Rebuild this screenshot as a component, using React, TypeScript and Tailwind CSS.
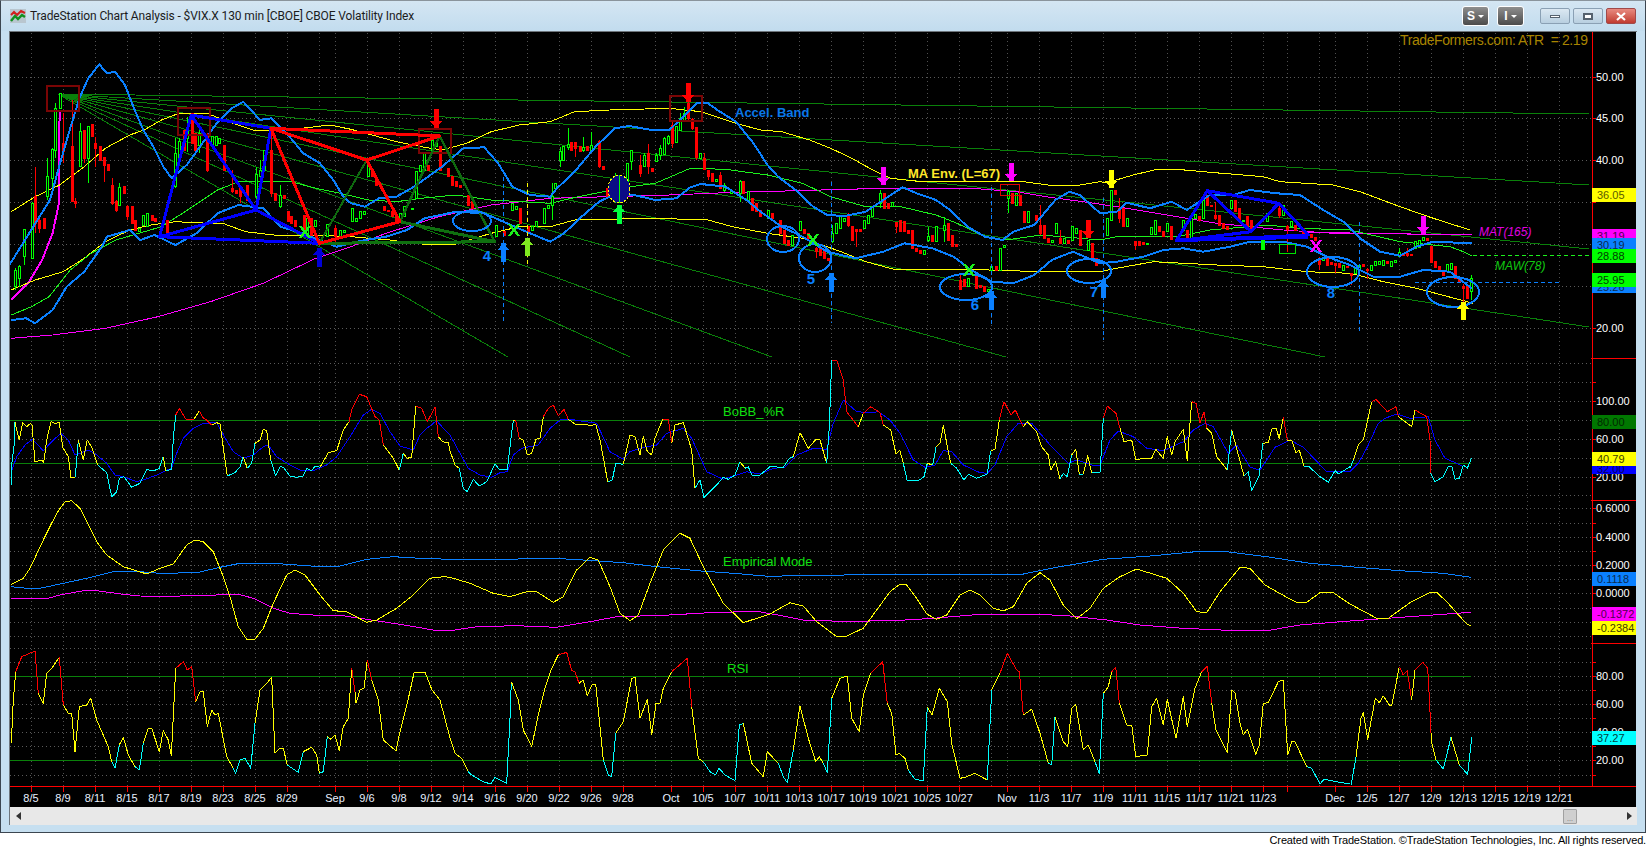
import React from "react";

// the series below are read off enlarged crops, so each one goes through a small
// window -> page conversion instead of carrying page coordinates by hand
const at = (ox: number, oy: number, sx = 3) => (s: string) =>
  s
    .trim()
    .split(/\s+/)
    .map((p) => {
      const [x, y] = p.split(",").map(Number);
      return `${(ox + x / sx).toFixed(1)},${(oy + y / 3).toFixed(1)}`;
    })
    .join(" ");

const z1 = at(0, 0);
const z6 = at(0, 70, 2.85);
const z7 = at(550, 70, 2.85);
const z8 = at(1050, 140);
const p5 = at(0, 640);
const p4 = at(1246, 640);
const o10 = at(0, 360);
const o11 = at(450, 360);
const o12 = at(900, 360);
const o9 = at(1300, 360);

const BAND = "#0a80ff";
const YEL = "#ffff00";
const LIME = "#1cf01c";
const DGREEN = "#0a800a";
const MAG = "#ff00ff";
const RED = "#ff0000";
const CYAN = "#00ffff";
const NAVY = "#0000ff";

const upperBand = [
  z1("0,840 150,600 180,490 215,370 240,290 265,235 298,193 320,220 345,215 375,255 400,320 430,390 460,440 490,500 515,535 560,495 600,440 650,370 695,325 730,305 780,360 815,355 860,400 910,460 960,490 1000,540 1030,590"),
  z6("1000,400 1040,410 1080,385 1130,380 1180,350 1260,290 1320,235 1380,232 1420,280 1460,350 1510,375 1568,380"),
  z7("20,355 70,305 130,230 185,175 225,168 290,180 340,180 380,140 420,98 450,100 480,122 530,155 580,220 620,285 650,320 700,360 750,410 790,435 840,438 900,425 950,390 1005,352 1045,370 1100,390 1140,420 1190,470 1240,500 1290,510 1320,485 1380,465 1440,390 1480,365 1510,375 1568,430"),
  z8("200,215 230,188 300,205 365,185 410,210 480,165 550,165 600,150 680,160 750,165 820,210 880,245 930,295 990,335 1050,347 1100,320 1150,305 1265,310"),
].join(" ");

const lowerBand = [
  z6("32,750 75,745 100,760 150,720 190,650 240,605 290,530 305,500 370,480 400,510 440,495 500,525 560,490 620,430 680,405 750,415 800,470 860,490 960,530 1040,510 1100,500 1160,480 1210,445 1300,425 1380,430 1500,485 1568,515"),
  z7("40,490 90,440 140,395 180,375 240,375 300,390 360,385 400,352 430,342 500,350 560,390 600,425 660,470 720,500 790,545 870,565 950,545 1010,520 1090,535 1150,560 1200,600 1260,635 1320,640 1380,615 1430,570 1490,545 1568,580"),
  z8("200,365 280,350 340,330 400,325 460,335 540,320 600,305 700,305 770,320 830,350 900,375 970,410 1050,410 1120,390 1200,395 1265,445"),
].join(" ");

const upperEnv = [
  z6("32,425 100,380 170,345 240,290 300,235 370,195 410,180 460,150 510,130 590,130 650,155 720,180 780,180 860,175 940,165 1000,178 1060,195 1130,215 1200,230 1260,240 1330,220 1400,185 1480,165 1568,155"),
  z7("70,125 170,120 340,115 430,125 530,160 600,180 660,185 740,210 800,235 860,265 920,300 970,325 1060,335 1250,335 1350,335 1420,345 1510,345 1568,335"),
  z8("170,128 250,105 320,88 380,88 480,97 640,110 690,125 850,135 930,155 1050,200 1150,235 1260,270"),
].join(" ");

const lowerEnv = [
  z6("32,660 100,630 180,605 240,565 300,515 370,480 430,465 500,455 640,462 700,485 780,495 900,495 1000,500 1110,510 1200,522 1290,525 1400,490 1480,470 1568,470"),
  z7("70,450 300,445 450,450 520,470 620,490 720,505 830,545 900,575 980,598 1250,600 1400,605 1568,605"),
  z8("200,385 310,365 500,375 640,380 770,395 900,400 1000,425 1100,445 1270,490"),
].join(" ");

const midGreen = [
  z6("32,735 90,710 140,680 200,600 260,550 330,510 460,470 520,430 620,360 680,335 830,335 900,355 970,370 1050,390 1130,395 1200,385 1300,375 1400,390 1568,400"),
  z7("80,380 200,355 300,340 400,295 500,298 620,315 720,340 800,380 900,410 1000,410 1100,435 1160,460 1240,500 1300,510 1400,495 1568,510"),
  z8("200,290 380,290 480,270 650,255 750,265 900,270 1050,305 1200,320 1240,335 1265,347"),
].join(" ");

const slowMag = [
  z6("32,805 150,795 300,775 450,740 600,695 750,640 900,565 1000,530 1100,490 1250,440 1400,405 1568,385"),
  z7("340,375 500,368 700,362 950,355 1200,355 1330,365"),
  z8("0,172 100,185 200,200 350,225 500,250 700,270 850,280 1165,283 1260,285"),
].join(" ");

const fastMag = z6("32,690 80,640 120,570 150,490 168,400 170,120");

const fanEnds: [number, number][] = [
  [1589, 114],
  [1589, 185],
  [1589, 249],
  [1589, 327],
  [1325, 357],
  [1006, 357],
  [772, 357],
  [630, 357],
  [508, 357],
];

// [x, high, low, bodyTop, bodyBottom] - no body values means the body fills the range
type C = number[];
const green6: C[] = [[43,595,660,600,650],[54,585,650,590,625],[68,478,585,478,560],[90,395,565,400,565],[135,265,390,320,380],[147,235,350,238,325],[158,100,265,115,240],[170,70,115],[227,160,290,185,290],[250,170,340,170,265],[340,340,405,352,405],[397,475,483],[408,435,465],[420,430,470],[498,205,355,250,350],[510,205,270,215,265],[534,140,245,180,205],[568,180,250,190,225],[603,200,230],[615,200,225],[625,205,220],[730,290,400,312,380],[742,270,340,300,320],[752,240,300],[797,345,415,375,410],[876,445,490],[899,450,470],[933,462,500],[968,480,500],[980,480,488],[1002,415,455],[1014,445,455],[1025,425,445],[1037,425,432],[1048,280,320],[1140,430,450],[1150,410,440],[1173,415,419],[1185,305,385],[1196,285,305],[1208,250,300],[1232,210,240],[1242,220,230],[1414,465,500],[1460,400,420],[1470,410,418],[1515,470,480],[1527,455,470],[1550,415,460],[1562,405,415]];
const red6: C[] = [[100,290,490,380,460],[112,440,490,452,475],[124,445,475],[180,130,280,220,245],[204,90,395,230,395],[215,385,415,395,400],[238,180,280,182,265],[261,162,200],[272,200,290,220,235],[284,230,270],[295,260,335,262,285],[307,282,300],[318,325,405,345,400],[330,390,425,395,420],[352,350,370],[363,405,450,408,440],[375,410,460],[386,450,480],[432,435,450],[443,445,455],[476,450,490],[523,180,240],[546,130,220],[557,190,240],[591,190,305,200,300],[637,225,300],[660,300,370,355,365],[672,360,370],[683,350,400,350,380],[705,345,390],[773,175,380,240,370],[785,370,390],[808,375,385],[820,425,455],[830,440,460],[842,450,470],[865,435,495],[887,445,495],[956,465,520,475,500],[1060,300,320],[1072,325,345],[1093,410,420],[1105,420,425],[1117,425,440],[1128,435,450],[1220,285,300],[1254,230,300],[1276,295,320],[1288,320,345],[1300,335,350],[1312,345,352],[1334,375,405],[1346,395,415],[1358,415,425],[1437,485,495],[1482,415,460],[1505,470,490]];
const green7: C[] = [[5,340,450,380,405],[15,340,355],[27,230,290,245,270],[38,230,270],[50,175,240,222,232],[95,200,245,232,240],[118,185,250,225,240],[186,310,400,325,385],[220,280,340],[232,240,300,242,275],[267,250,290,255,288],[301,250,275,255,275],[313,225,270,235,255],[324,200,250,205,252],[335,195,225,200,220],[358,170,220,170,218],[370,130,180,145,180],[381,110,150,130,150],[427,250,265],[472,328,335],[495,340,365,345,360],[517,360,370],[540,330,395,335,370],[563,365,395],[620,420,445],[690,495,525],[711,455,480],[803,465,520,490,515],[815,460,490],[826,440,475],[838,445,455],[895,450,475],[906,435,460],[918,410,440],[940,360,415,370,400],[974,398,408],[1065,540,552],[1077,470,515,498,510],[1100,470,515],[1122,440,515,465,480],[1190,625,650],[1247,658,665],[1258,590,600],[1281,535,600],[1293,525,532],[1305,360,430,365,385],[1327,370,405],[1362,425,458],[1430,512,517],[1442,460,490],[1465,505,520],[1488,470,510],[1499,475,490],[1533,510,540]];
const red7: C[] = [[60,218,240],[72,215,262,218,235],[84,228,245],[106,228,240],[140,210,295,215,290],[152,288,298],[163,355,385,355,378],[197,320,370],[255,255,322,285,310],[278,222,312,250,290],[290,295,305],[347,150,235,165,220],[392,95,150,100,145],[404,145,180,148,175],[415,170,270,172,262],[438,250,300,265,298],[450,300,330,300,318],[461,310,335],[483,305,358,315,355],[551,335,370],[575,385,420],[586,400,425],[598,420,438],[632,430,445],[655,450,490],[666,480,520],[678,510,525],[723,478,490],[735,490,505],[758,530,565,535,545],[770,535,555],[781,545,565],[792,566,572],[849,430,470,435,465],[861,470,510],[871,478,530,478,485],[883,478,485],[951,370,415],[962,400,415],[985,455,490,458,468],[997,450,485],[1008,455,485],[1020,480,490],[1031,480,535],[1042,535,545],[1054,540,550],[1088,495,515],[1133,460,510],[1145,495,530],[1156,522,528],[1168,615,660,630,658],[1179,628,650],[1213,620,655],[1224,645,652],[1236,648,665],[1270,588,600],[1316,370,400],[1339,375,405],[1351,425,458],[1385,435,450],[1396,405,495,465,490],[1408,465,505],[1419,505,517],[1453,480,520,505,520],[1476,510,520],[1510,480,525],[1544,520,570],[1556,565,585]];
const green8: C[] = [[172,235,285],[184,150,240],[232,235,260],[292,310,314],[304,262,282],[316,240,282],[352,250,275],[400,240,270],[424,235,295],[436,222,235],[460,180,235],[544,180,205],[580,240,245],[652,220,245],[700,195,225],[724,245,258],[820,355,362],[880,375,390],[916,385,400],[928,375,392],[964,375,390],[976,365,375],[988,365,372],[1000,362,375],[1024,365,380],[1036,362,368],[1048,325,350,338,350],[1096,303,325],[1108,300,322],[1120,292,302],[1192,372,395],[1204,370,388],[1264,405,480,415,455]];
const red8: C[] = [[196,152,162],[208,175,250,205,235],[220,205,260],[256,305,330,305,316],[268,305,315],[280,306,312],[328,258,275],[340,275,288],[364,260,297],[412,270,295],[448,230,240],[472,165,195],[484,195,200],[496,185,240,225,235],[508,225,255],[520,250,265],[532,260,268],[556,180,215],[568,205,245],[592,230,262],[604,240,272],[688,195,235,205,225],[712,255,335,258,268],[736,255,270],[760,265,285],[784,282,292],[796,292,300],[808,350,390,360,372],[832,355,375],[844,368,372],[856,368,400,370,375],[868,370,382],[892,378,382],[904,398,435,400,405],[940,372,378],[952,385,418,388,392],[1012,365,370],[1060,342,345],[1072,325,352,340,345],[1084,342,345],[1132,295,300],[1144,320,368],[1156,365,382],[1168,380,395],[1180,392,405],[1216,380,415],[1228,415,425],[1240,432,485,438,445],[1252,435,475]];

// indicator lines change colour by run: one [colour, points] per run
const bobb: [string, string][] = [
  [CYAN, o10("34,375 36,305 42,260 45,185")],
  [YEL, o10("45,185 50,210 58,240 68,188 80,200 92,190 96,195 105,305 125,300 131,307 140,240 153,185 165,190 178,188 188,262 205,290 213,353 226,352")],
  [CYAN, o10("226,352 235,240")],
  [YEL, o10("235,240 250,300 262,240 275,262 293,315")],
  [CYAN, o10("293,315 320,338 335,410 350,395 358,355 372,350 395,382 420,370 440,328 460,333 478,325 490,290")],
  [YEL, o10("490,290 497,332")],
  [CYAN, o10("497,332 515,328 520,235 527,165")],
  [RED, o10("527,165 538,145 558,178 582,178")],
  [YEL, o10("582,178 598,152")],
  [RED, o10("598,152 608,172 622,182 635,195")],
  [YEL, o10("635,195 650,188 660,192 682,348")],
  [CYAN, o10("682,348 705,338 720,320 730,290")],
  [YEL, o10("730,290 742,325")],
  [CYAN, o10("742,325 755,310 765,250")],
  [YEL, o10("765,250 780,240 790,208 800,212 812,300")],
  [CYAN, o10("812,300 827,348 840,320 850,322 870,348 890,352 910,348 920,325 935,332 945,318 960,322")],
  [YEL, o10("960,322 985,278 1010,272 1030,210 1047,185")],
  [RED, o10("1047,185 1055,150 1078,103 1100,110 1125,170 1138,180 1150,255")],
  [YEL, o10("1150,255 1180,295 1198,330")],
  [CYAN, o10("1198,330 1210,280")],
  [YEL, o10("1210,280 1222,295 1235,292 1247,138")],
  [RED, o10("1247,138 1265,145 1282,185 1305,142 1315,230")],
  [YEL, o10("1315,230 1328,245 1345,248 1350,272")],
  [YEL, o11("0,272 15,315 28,325")],
  [CYAN, o11("28,325 40,385 52,395 70,358 88,378 110,365 135,312 148,328 172,330 183,235 190,182")],
  [YEL, o11("190,182 197,180")],
  [RED, o11("197,180 208,235")],
  [YEL, o11("208,235 220,240 232,285 245,280 258,238 270,235 280,170")],
  [RED, o11("280,170 295,145 310,135 325,168 342,148 355,178")],
  [YEL, o11("355,178 375,192 410,192 420,198 437,192 450,240 465,320 473,367")],
  [CYAN, o11("473,367 487,360 497,310 520,313")],
  [YEL, o11("520,313 540,225 555,230 570,285 580,228 592,275 605,285 615,235 638,178")],
  [RED, o11("638,178 655,178 665,250")],
  [YEL, o11("665,250 675,195 700,188 725,270 735,385")],
  [CYAN, o11("735,385 750,360 762,413 800,375 820,352 835,358 855,345 870,305")],
  [YEL, o11("870,305 885,325")],
  [CYAN, o11("885,325 895,320 905,345 930,345 960,320 1000,322 1018,295 1030,290")],
  [YEL, o11("1030,290 1050,218 1075,265 1098,238 1110,240 1130,310")],
  [CYAN, o11("1130,310 1138,200 1145,0")],
  [RED, o11("1145,0 1160,0 1180,60 1190,155 1225,200")],
  [YEL, o11("1225,200 1240,160")],
  [RED, o11("1240,160 1262,140 1290,158 1300,195")],
  [YEL, o11("1300,195 1322,210 1338,282 1350,270")],
  [YEL, o12("0,272 10,310")],
  [CYAN, o12("10,310 22,363 55,362 72,350 82,310")],
  [YEL, o12("82,310 98,315")],
  [CYAN, o12("98,315 108,262")],
  [YEL, o12("108,262 120,250 130,197 152,310")],
  [CYAN, o12("152,310 170,325 192,360 205,343 230,355 262,342 272,272")],
  [YEL, o12("272,272 285,268 298,180")],
  [RED, o12("298,180 312,125 333,165 346,150 370,200")],
  [YEL, o12("370,200 382,185 410,215 425,260 445,285 452,330 467,305 480,357")],
  [CYAN, o12("480,357 490,340 502,350 515,285")],
  [YEL, o12("515,285 527,268 538,343")],
  [CYAN, o12("538,343 550,343")],
  [YEL, o12("550,343 563,287 575,338")],
  [CYAN, o12("575,338 600,338 610,175")],
  [RED, o12("610,175 622,138 648,160 660,205")],
  [YEL, o12("660,205 672,245 695,240 707,298 755,295 767,268 790,295 802,230 815,285 825,245 850,208 862,303 870,190 875,125")],
  [RED, o12("875,125 888,130 900,190 912,155 920,205")],
  [YEL, o12("920,205 935,220 950,290 982,330")],
  [CYAN, o12("982,330 995,210")],
  [YEL, o12("995,210 1032,348")],
  [CYAN, o12("1032,348 1045,335 1055,393 1078,345 1088,250")],
  [YEL, o12("1088,250 1105,248 1115,207 1128,205 1138,235 1150,172")],
  [RED, o12("1150,172 1162,240")],
  [YEL, o12("1162,240 1175,240 1188,280 1198,270 1212,318")],
  [CYAN, o12("1212,318 1225,318 1260,350 1285,367 1305,332 1315,342 1350,320")],
  [CYAN, o9("150,325 160,300")],
  [YEL, o9("160,300 175,255 190,240 215,125")],
  [RED, o9("215,125 228,118 262,155 288,140 295,170")],
  [YEL, o9("295,170 335,200 345,150")],
  [RED, o9("345,150 380,170 390,240 392,340")],
  [CYAN, o9("392,340 405,365 430,350 445,318 455,318 465,358 478,355 490,315 502,325 515,293")],
];

const bobbSignal = [
  o10("36,330 50,290 75,255 97,238 130,272 155,245 182,220 205,240 225,285 240,280 265,270 290,285 320,310 345,345 370,350 410,365 430,360 470,345 500,330 515,325 530,280 550,235 580,205 610,190 650,188 670,225 700,275 730,295 760,285 790,260 805,255 830,290 870,315 900,330 940,332 980,315 1010,290 1050,230 1090,165 1115,148 1140,160 1170,215 1200,258 1240,270 1260,225 1280,205 1310,182 1330,205 1350,225"),
  o11("30,280 55,325 90,345 125,352 150,338 172,335 190,285 215,265 265,255 300,205 330,180 360,178 440,190 480,275 520,298 540,275 580,262 620,255 650,220 700,205 725,235 770,335 820,358 860,345 890,335 930,342 970,325 1005,322 1040,285 1090,265 1130,268 1150,190 1180,120 1220,155 1260,158 1285,155 1320,180 1350,220"),
  o12("40,300 75,322 105,315 130,272 155,275 190,315 240,338 262,340 285,315 320,230 355,190 395,190 450,255 505,310 530,300 575,315 600,315 630,240 655,213 700,230 740,265 790,272 850,245 880,210 915,190 940,200 985,280 1010,255 1050,322 1080,330 1125,262 1170,240 1210,262 1280,335 1350,335"),
  o9("175,310 200,265 235,190 255,175 290,162 330,175 385,170 405,240 435,295 470,310 490,320"),
].join(" ");

const emdYellow = [
  o10("33,674 70,655 90,625 130,540 170,460 195,425 215,422 240,445 290,545 320,585 370,620 440,642 480,625 520,612 560,555 585,540 610,545 640,575 670,650 690,710 715,800 740,838 765,838 790,805 820,730 860,645 885,630 915,645 960,705 1000,752 1040,755 1100,787 1130,780 1190,745 1240,705 1290,655 1330,650 1350,652"),
  o11("60,670 130,700 180,710 230,695 260,695 310,727 340,710 380,630 420,592 445,600 480,680 510,760 540,782 565,765 600,670 640,570 690,520 720,535 760,620 820,730 880,788 960,762 1020,728 1060,738 1100,785 1160,830 1190,828 1240,805 1280,750 1320,695 1350,672"),
  o12("20,675 50,715 80,762 110,778 140,765 180,705 210,690 240,705 280,745 310,753 340,740 380,670 420,638 450,660 490,735 530,776 570,745 610,685 660,650 710,627 800,655 850,700 890,755 920,758 960,695 1020,622 1050,625 1095,675 1160,712 1190,727 1220,727 1260,698 1300,698 1350,732"),
  o9("230,775 265,775 330,728 390,697 410,697 440,725 500,792 513,798"),
].join(" ");
const emdBlue = [
  o10("33,680 80,685 120,685 180,672 260,655 340,635 420,635 480,640 590,638 660,622 720,610 850,612 960,620 1020,618 1100,598 1180,590 1260,595 1350,598"),
  o11("160,598 310,595 400,600 520,608 620,620 740,632 850,640 970,650 1020,646 1350,644"),
  o12("360,644 470,622 610,598 750,588 900,574 980,575 1100,590 1230,610 1350,620"),
  o9("300,632 430,640 513,652"),
].join(" ");
const emdMag = [
  o10("33,715 145,715 180,705 250,692 290,692 370,703 420,708 500,710 580,706 720,704 760,715 820,745 870,760 950,766 1020,766 1100,778 1180,790 1260,803 1310,812 1350,812"),
  o11("80,800 200,797 320,802 420,785 500,770 640,766 780,758 920,754 1000,768 1070,782 1220,784 1350,781"),
  o12("100,775 240,763 410,763 500,767 620,780 720,795 850,805 1030,813 1100,812 1200,795 1350,783"),
  o9("400,765 513,757"),
].join(" ");

const rsi: [string, string][] = [
  [YEL, p5("34,310 40,180 47,95")],
  [RED, p5("47,95 65,50 105,33 115,160")],
  [YEL, p5("115,160 130,190 140,100 155,85 178,52")],
  [RED, p5("178,52 190,195")],
  [YEL, p5("190,195 205,220 215,220 225,335 238,200 260,195 272,175 290,240 325,320 335,365")],
  [CYAN, p5("335,365 345,385 358,315")],
  [YEL, p5("358,315 370,292 385,345 405,380")],
  [CYAN, p5("405,380 418,390 430,310")],
  [YEL, p5("430,310 445,265 455,265 478,335 490,272 505,300 514,348 527,85")],
  [RED, p5("527,85 550,65 562,90 575,80 587,185")],
  [YEL, p5("587,185 600,155 610,155 622,260 635,210 645,225 655,220 680,350 700,385")],
  [CYAN, p5("700,385 707,400 720,360 735,355 752,385 765,250")],
  [YEL, p5("765,250 780,150 800,130 815,112 825,340 840,325 850,325 862,375")],
  [CYAN, p5("862,375 895,397 910,335")],
  [YEL, p5("910,335 935,322 950,345 958,400")],
  [CYAN, p5("958,400 970,395 982,290")],
  [YEL, p5("982,290 993,298 1005,285 1018,332 1030,260 1045,235 1055,85")],
  [RED, p5("1055,85 1065,155")],
  [YEL, p5("1065,155 1068,190 1080,150 1092,145 1102,60")],
  [RED, p5("1102,60 1115,120")],
  [YEL, p5("1115,120 1135,180 1150,300 1188,333 1200,275") + " 408,700 414,673 425,672 432,690 440,700 450,738"],
  [YEL, o11("0,1135 15,1180 35,1195 55,1235")],
  [CYAN, o11("55,1235 65,1245 100,1265 122,1272 135,1252 170,1270 180,1075 184,965")],
  [YEL, o11("184,965 205,1020 220,1110 245,1160 265,1065 285,985 305,925 325,885")],
  [RED, o11("325,885 350,877 365,932 375,935 387,970")],
  [YEL, o11("387,970 400,960 412,1008 425,975 437,972 460,1200")],
  [CYAN, o11("460,1200 475,1245 485,1250 497,1120")],
  [YEL, o11("497,1120 520,1085 545,955 555,952 570,1075 592,1018 605,1125 618,1030 630,1030 640,985 665,935")],
  [RED, o11("665,935 712,895 725,1040")],
  [YEL, o11("725,1040 745,1195 760,1205")],
  [CYAN, o11("760,1205 780,1235 797,1245 807,1225 825,1245 855,1262 868,1095 880,1090")],
  [YEL, o11("880,1090 905,1210 940,1250 952,1175 985,1210")],
  [CYAN, o11("985,1210 1000,1250 1012,1268 1030,1170")],
  [YEL, o11("1030,1170 1050,1038 1075,1135 1097,1205 1108,1190 1120,1210")],
  [CYAN, o11("1120,1210 1132,1238 1145,1015")],
  [YEL, o11("1145,1015 1170,955 1192,948 1205,1075 1228,1115 1240,1005 1262,940")],
  [RED, o11("1262,940 1298,905 1312,1030")],
  [YEL, o11("1312,1030 1325,1060 1338,1185 1350,1180")],
  [YEL, o12("0,1183 15,1195 25,1230")],
  [CYAN, o12("25,1230 45,1258 70,1262 82,1040")],
  [YEL, o12("82,1040 96,1065 118,985 142,1025 155,1150 180,1255 195,1252 225,1240 262,1260")],
  [CYAN, o12("262,1260 275,990")],
  [YEL, o12("275,990 300,940")],
  [RED, o12("300,940 322,880 350,930 358,935 370,1065")],
  [YEL, o12("370,1065 395,1048 420,1120 445,1210")],
  [CYAN, o12("445,1210 455,1215 465,1070")],
  [YEL, o12("465,1070 490,1145 503,1160 515,1045 527,1033 550,1170 565,1155 585,1205")],
  [CYAN, o12("585,1205 598,1240 610,1000")],
  [YEL, o12("610,1000 625,980 635,935")],
  [RED, o12("635,935 647,922 658,1030")],
  [YEL, o12("658,1030 680,1095 695,1095 707,1190 742,1185 755,1040 770,1015 790,1095 802,1018 828,1135 850,1010 862,1100 885,985 905,935")],
  [RED, o12("905,935 922,918 935,1030")],
  [YEL, o12("935,1030 948,1110 982,1178 995,990 1005,1000 1020,1090 1030,1125 1042,1108 1067,1183 1078,1155 1090,1030 1105,1028 1135,965 1150,960 1163,1185 1175,1145 1185,1145 1220,1220")],
  [CYAN, o12("1220,1220 1235,1225 1260,1272 1272,1258 1310,1265 1350,1272")],
  [CYAN, p4("316,434 330,350")],
  [YEL, p4("330,350 345,235 352,218 365,298 388,175 400,188 412,168 430,195 437,198 460,80")],
  [RED, p4("460,80 472,105 484,92 495,168")],
  [YEL, p4("495,168 497,178 507,90")],
  [RED, p4("507,90 530,67 545,85 550,170 555,280")],
  [YEL, p4("555,280 555,300 570,360")],
  [CYAN, p4("570,360 592,387 615,292")],
  [YEL, p4("615,292 640,375")],
  [CYAN, p4("640,375 665,403 677,292")],
];

const dates: [number, string][] = [
  [31, "8/5"], [63, "8/9"], [95, "8/11"], [127, "8/15"], [159, "8/17"], [191, "8/19"], [223, "8/23"], [255, "8/25"], [287, "8/29"], [335, "Sep"],
  [367, "9/6"], [399, "9/8"], [431, "9/12"], [463, "9/14"], [495, "9/16"], [527, "9/20"], [559, "9/22"], [591, "9/26"], [623, "9/28"], [671, "Oct"],
  [703, "10/5"], [735, "10/7"], [767, "10/11"], [799, "10/13"], [831, "10/17"], [863, "10/19"], [895, "10/21"], [927, "10/25"], [959, "10/27"], [1007, "Nov"],
  [1039, "11/3"], [1071, "11/7"], [1103, "11/9"], [1135, "11/11"], [1167, "11/15"], [1199, "11/17"], [1231, "11/21"], [1263, "11/23"], [1335, "Dec"],
  [1367, "12/5"], [1399, "12/7"], [1431, "12/9"], [1463, "12/13"], [1495, "12/15"], [1527, "12/19"], [1559, "12/21"],
];
const gridX = [...dates.map((d) => d[0]), 319, 655, 991, 1287, 1319];
const gridY = [
  77, 118, 160, 202, 244, 286, 328,
  363, 382, 401, 420, 439, 458, 477, 495,
  508, 523, 537, 551, 565, 579, 593, 608, 622, 636,
  648, 662, 676, 690, 704, 718, 732, 746, 760, 775,
];

const axisLabels: [number, string][] = [
  [77, "50.00"], [118, "45.00"], [160, "40.00"], [328, "20.00"],
  [401, "100.00"], [439, "60.00"], [477, "20.00"],
  [508, "0.6000"], [537, "0.4000"], [565, "0.2000"], [593, "0.0000"],
  [676, "80.00"], [704, "60.00"], [732, "40.00"], [760, "20.00"],
];
const axisTicks = [77, 118, 160, 202, 244, 286, 328, 382, 401, 420, 439, 458, 477, 508, 523, 537, 551, 565, 579, 593, 608, 622, 662, 676, 690, 704, 718, 732, 746, 760, 775];

// value tags stacked on the price axis, painted in this order
const tags: [number, number, string, string, string][] = [
  [188, 14, YEL, "36.05", "#5a5a00"],
  [229, 14, MAG, "31.19", "#500050"],
  [238, 11, BAND, "30.19", "#0a2a50"],
  [249, 14, "#00ff00", "28.88", "#004000"],
  [280, 13, BAND, "25.26", "#0a2a50"],
  [273, 14, "#00ff00", "25.95", "#004000"],
  [415, 14, "#007800", "80.00", "#002800"],
  [462, 12, NAVY, "32.00", "#000060"],
  [452, 14, YEL, "40.79", "#404000"],
  [572, 14, BAND, "0.1118", "#0a2a50"],
  [607, 14, MAG, "-0.1372", "#500050"],
  [621, 14, YEL, "-0.2384", "#404000"],
  [731, 14, CYAN, "37.27", "#004040"],
];

const arrows: [number, number, number, string, boolean][] = [
  [436, 109, 128, RED, false],
  [319, 248, 267, "#0000d8", true],
  [503.5, 243, 262, BAND, true],
  [527, 238, 256, "#7fe820", true],
  [688, 83, 102, RED, false],
  [619, 205, 224, "#00ff40", true],
  [831, 273, 292, BAND, true],
  [991, 291, 310, BAND, true],
  [883, 167, 185, MAG, false],
  [1011, 163, 181, MAG, false],
  [1088, 220, 238, RED, false],
  [1111, 170, 188, YEL, false],
  [1103, 280, 298, BAND, true],
  [1423, 216, 234, MAG, false],
  [1463, 302, 320, YEL, true],
];

const dashes: [number, number, number, number, string][] = [
  [503.5, 177, 503.5, 323, BAND],
  [527, 183, 527, 265, YEL],
  [831, 182, 831, 323, BAND],
  [991, 187, 991, 327, BAND],
  [1103, 198, 1103, 340, BAND],
  [1359, 222, 1359, 333, BAND],
  [1415, 282, 1562, 282, BAND],
];

const rings: [number, number, number, number][] = [
  [472, 221, 19, 10],
  [783, 239, 16, 13],
  [815, 258, 16, 14],
  [966, 287, 26, 13],
  [1089, 271, 22, 12],
  [1333, 272, 26, 15],
  [1453, 292, 26, 15],
];

const crosses: [number, number, string][] = [
  [305, 232, LIME],
  [514, 230, LIME],
  [813, 240, LIME],
  [969, 270, LIME],
  [1316, 246, MAG],
];

const numbers: [number, number, string][] = [
  [487, 256, "4"],
  [811, 279, "5"],
  [975, 305, "6"],
  [1094, 292, "7"],
  [1331, 293, "8"],
];

function Candles({ list, conv, up }: { list: C[]; conv: (s: string) => string; up: boolean }) {
  return (
    <>
      {list.map(([x, hi, lo, bt, bb], i) => {
        const [rx, top] = conv(`${x},${hi}`).split(",").map(Number);
        const [, bottom] = conv(`${x},${lo}`).split(",").map(Number);
        const [, bodyTop] = conv(`${x},${bt ?? hi}`).split(",").map(Number);
        const [, bodyBottom] = conv(`${x},${bb ?? lo}`).split(",").map(Number);
        const cx = Math.round(rx) + 0.5;
        const color = up ? "#00ff00" : RED;
        return (
          <g key={i}>
            <line x1={cx} x2={cx} y1={top} y2={bottom} stroke={color} strokeWidth={1} />
            <rect
              x={cx - 1}
              y={bodyTop}
              width={2}
              height={Math.max(bodyBottom - bodyTop, 1)}
              fill={up ? "#000" : RED}
              stroke={color}
              strokeWidth={1}
            />
          </g>
        );
      })}
    </>
  );
}

function Arrow({ x, y1, y2, color, up }: { x: number; y1: number; y2: number; color: string; up: boolean }) {
  const head = up
    ? `${x - 6},${y1 + 7} ${x},${y1} ${x + 6},${y1 + 7}`
    : `${x - 6},${y2 - 7} ${x},${y2} ${x + 6},${y2 - 7}`;
  return (
    <>
      <rect x={x - 2.5} y={y1} width={5} height={y2 - y1} fill={color} />
      <polygon points={head} fill={color} />
    </>
  );
}

function Line({ points, color, w = 1, dash }: { points: string; color: string; w?: number; dash?: string }) {
  return <polyline points={points} fill="none" stroke={color} strokeWidth={w} strokeDasharray={dash} strokeLinejoin="round" />;
}

function Chart() {
  return (
    <svg
      width={1626}
      height={775}
      viewBox="10 32 1626 775"
      className="block bg-black"
      shapeRendering="crispEdges"
      fontFamily="'Liberation Sans', Arial, sans-serif"
    >
      {/* dotted grid */}
      {gridY.map((y) => (
        <line key={y} x1={10} x2={1592} y1={y} y2={y} stroke="#5a5a5a" strokeDasharray="1 3" />
      ))}
      {gridX.map((x) => (
        <line key={x} x1={x} x2={x} y1={33} y2={786} stroke="#505050" strokeDasharray="1 3" />
      ))}

      {/* gann fan */}
      <polygon points="58,94 92,94 80,103" fill="#0a6a0a" />
      {fanEnds.map(([x, y]) => (
        <line key={`${x}-${y}`} x1={58} y1={94} x2={x} y2={y} stroke={DGREEN} />
      ))}

      <Line points={slowMag} color={MAG} />
      <Line points={z8("770,277 1265,285")} color={MAG} />
      <Line points={fastMag} color={MAG} w={2} />
      <Line points={upperEnv} color={YEL} />
      <Line points={lowerEnv} color={YEL} />
      <Line points={midGreen} color={LIME} />
      <line x1={1473} x2={1589} y1={255} y2={255} stroke={LIME} strokeDasharray="4 3" />

      <Candles list={green6} conv={z6} up />
      <Candles list={red6} conv={z6} up={false} />
      <Candles list={green7} conv={z7} up />
      <Candles list={red7} conv={z7} up={false} />
      <Candles list={green8} conv={z8} up />
      <Candles list={red8} conv={z8} up={false} />

      <Line points={upperBand} color={BAND} w={2} />
      <Line points={lowerBand} color={BAND} w={2} />

      {/* pattern boxes */}
      <g fill="none" stroke="#7a0505" strokeWidth={2}>
        <rect x={47} y={86} width={32} height={25} />
        <rect x={178} y={108} width={32} height={27} />
        <rect x={419} y={129} width={32} height={24} />
        <rect x={670} y={96} width={32} height={25} />
      </g>
      <rect x={1000} y={184} width={19} height={11} fill="none" stroke="#e00000" />
      <rect x={1279} y={244} width={16} height={9} fill="none" stroke="#00e000" />
      <rect x={1261} y={240} width={4} height={10} fill="#00ff00" />

      {/* harmonic patterns */}
      <Line points={z6("455,500 545,135 772,175 730,420 455,500 910,520 730,420 545,135")} color="#0000ff" w={3} />
      <Line points={z6("910,520 1045,270")} color="#0f6a0f" w={2} />
      <Line points={z6("1140,455 1253,198 1410,515")} color="#0f6a0f" w={2.5} />
      <Line points={z6("910,520 1410,515 1140,455")} color="#0f700f" w={3} />
      <Line points={z6("772,175 910,520 1140,455 1045,270 772,175 1253,198 1045,270")} color={RED} w={3} />
      <Line points={z8("378,303 472,152 686,190 775,285 378,303 603,275 472,152")} color="#0000ff" w={3} />
      <Line points={z8("603,275 686,190")} color="#0000ff" w={3} />
      <Line points={z8("378,300 775,290")} color="#0000ff" w={4} />

      {rings.map(([cx, cy, rx, ry], i) => (
        <ellipse key={i} cx={cx} cy={cy} rx={rx} ry={ry} fill="none" stroke={BAND} strokeWidth={2} />
      ))}
      <ellipse cx={619} cy={189} rx={11} ry={14} fill="#0b0b86" stroke={YEL} strokeDasharray="2 2" />
      <line x1={619} x2={619} y1={175} y2={203} stroke="#00ff00" />

      {dashes.map(([x1, y1, x2, y2, c], i) => (
        <line key={i} x1={x1} y1={y1} x2={x2} y2={y2} stroke={c} strokeDasharray="4 3" />
      ))}
      {arrows.map(([x, y1, y2, c, up], i) => (
        <Arrow key={i} x={x} y1={y1} y2={y2} color={c} up={up} />
      ))}
      {crosses.map(([x, y, c], i) => (
        <path key={i} d={`M${x - 5} ${y - 6}L${x + 5} ${y + 6}M${x + 5} ${y - 6}L${x - 5} ${y + 6}`} stroke={c} strokeWidth={2.4} fill="none" />
      ))}

      {/* main pane labels */}
      <text x={1400} y={45} fontSize={14} fill="#a88400" textLength={188}>TradeFormers.com: ATR{"\u00a0\u00a0"}= 2.19</text>
      <text x={735} y={117} fontSize={13} fontWeight={700} fill="#0a78e8">Accel. Band</text>
      <text x={908} y={178} fontSize={13} fontWeight={700} fill="#ffe82a">MA Env. (L=67)</text>
      <text x={1479} y={236} fontSize={12} fontStyle="italic" fill="#e000e0">MAT(165)</text>
      <text x={1495} y={270} fontSize={12} fontStyle="italic" fill="#10c810">MAW(78)</text>
      {numbers.map(([x, y, n]) => (
        <text key={n} x={x} y={y + 5} textAnchor="middle" fontSize={15} fontWeight={700} fill={BAND}>{n}</text>
      ))}

      {/* BoBB_%R */}
      <line x1={10} x2={1471} y1={420} y2={420} stroke={DGREEN} />
      <line x1={10} x2={1471} y1={463} y2={463} stroke={DGREEN} />
      <Line points={bobbSignal} color={NAVY} />
      {bobb.map(([c, pts], i) => (
        <Line key={i} points={pts} color={c} />
      ))}
      <text x={723} y={416} fontSize={13} fill="#10e010">BoBB_%R</text>

      {/* Empirical Mode */}
      <Line points={emdBlue} color={BAND} />
      <Line points={emdMag} color={MAG} />
      <Line points={emdYellow} color={YEL} />
      <text x={723} y={566} fontSize={13} fill="#10e010">Empirical Mode</text>

      {/* RSI */}
      <line x1={10} x2={1471} y1={676} y2={676} stroke={DGREEN} />
      <line x1={10} x2={1471} y1={760} y2={760} stroke={DGREEN} />
      {rsi.map(([c, pts], i) => (
        <Line key={i} points={pts} color={c} />
      ))}
      <text x={727} y={673} fontSize={13} fill="#10e010">RSI</text>

      {/* price axis */}
      <line x1={1592} x2={1592} y1={32} y2={786} stroke={RED} />
      {[358, 500, 643].map((y) => (
        <line key={y} x1={1591} x2={1636} y1={y} y2={y} stroke={RED} />
      ))}
      {axisTicks.map((y) => (
        <line key={y} x1={1592} x2={1596} y1={y} y2={y} stroke={RED} />
      ))}
      {axisLabels.map(([y, t]) => (
        <text key={`${y}${t}`} x={1596} y={y + 4} fontSize={11} fill="#fff">{t}</text>
      ))}
      {tags.map(([y, h, bg, t, fg]) => (
        <g key={`${y}${t}`}>
          <rect x={1592} y={y} width={44} height={h} fill={bg} />
          <text x={1597} y={y + 11} fontSize={11} fill={fg}>{t}</text>
        </g>
      ))}

      {/* date axis */}
      <line x1={10} x2={1636} y1={786} y2={786} stroke={RED} />
      {dates.concat([[1287, ""]] as [number, string][]).map(([x]) => (
        <line key={x} x1={x} x2={x} y1={786} y2={792} stroke={RED} />
      ))}
      {dates.map(([x, t]) => (
        <text key={t} x={x} y={802} textAnchor="middle" fontSize={11} fill="#e8f0ff">{t}</text>
      ))}
    </svg>
  );
}

function AppIcon() {
  return (
    <svg width={16} height={14} viewBox="0 0 16 14" className="mr-1 shrink-0">
      <rect width={16} height={14} fill="#b9c6cf" />
      <path d="M1 6L4 3L7 6L11 2L15 4" fill="none" stroke="#d02020" strokeWidth={2} />
      <path d="M1 12L5 7L8 10L12 6L15 8" fill="none" stroke="#109020" strokeWidth={2.4} />
    </svg>
  );
}

function MenuButton({ label }: { label: string }) {
  return (
    <div className="flex h-[20px] w-[27px] items-center justify-center gap-[3px] rounded-[3px] border border-white bg-gradient-to-b from-[#8f8f8f] to-[#4c4c4c] text-[12px] font-bold text-white">
      <span>{label}</span>
      <span className="h-0 w-0 border-x-[3px] border-t-[3px] border-x-transparent border-t-white" />
    </div>
  );
}

function WinButton({ className, children }: { className: string; children: React.ReactNode }) {
  return (
    <div className={`flex h-[16px] w-[30px] items-center justify-center rounded-[2px] border ${className}`}>
      {children}
    </div>
  );
}

export default function App() {
  return (
    <div className="flex h-[847px] w-[1646px] flex-col overflow-hidden bg-white font-['Liberation_Sans',Arial,sans-serif]">
      <div className="flex h-[833px] w-[1646px] flex-col border border-[#3c4650] border-t-[#8a949c] bg-[#c6dff0]">
        <div className="flex h-[30px] shrink-0 items-center bg-gradient-to-b from-[#d4e6f3] to-[#c2dcee] pl-[9px] pr-[9px]">
          <AppIcon />
          <span className="font-['Roboto',sans-serif] text-[12px] tracking-[-0.13px] text-[#1c1c1c]">
            TradeStation Chart Analysis - $VIX.X 130 min [CBOE] CBOE Volatility Index
          </span>
          <div className="ml-auto flex items-center gap-[8px]">
            <MenuButton label="S" />
            <MenuButton label="I" />
            <div className="ml-[8px] flex items-center gap-[3px]">
              <WinButton className="border-[#8aa0b4] bg-gradient-to-b from-[#dbe8f2] to-[#b8cfe0]">
                <span className="h-[3px] w-[10px] border border-[#56626e] bg-white" />
              </WinButton>
              <WinButton className="border-[#8aa0b4] bg-gradient-to-b from-[#dbe8f2] to-[#b8cfe0]">
                <span className="h-[7px] w-[10px] border-2 border-[#56626e] bg-white" />
              </WinButton>
              <WinButton className="border-[#a04a4a] bg-gradient-to-b from-[#e88a80] to-[#c03a30]">
                <svg width={12} height={9} viewBox="0 0 12 9">
                  <path d="M2 1L10 8M10 1L2 8" stroke="#fff" strokeWidth={2.2} />
                </svg>
              </WinButton>
            </div>
          </div>
        </div>
        <div className="flex min-h-0 flex-1 flex-col pl-[8px] pr-[8px]">
          <div className="border-l border-t border-[#6e757b]">
            <Chart />
          </div>
          <div className="flex h-[18px] items-center justify-between border-l border-[#6e757b] bg-[#e8e8e8] pl-[6px] pr-[5px]">
            <span className="h-0 w-0 border-y-[4px] border-r-[5px] border-y-transparent border-r-[#333]" />
            <div className="flex items-center gap-[50px]">
              <span className="flex h-[15px] w-[14px] items-end justify-center rounded-[1px] border border-[#a0a0a0] bg-[#cfcfcf] text-[7px] leading-[9px] text-[#666]">...</span>
              <span className="h-0 w-0 border-y-[4px] border-l-[5px] border-y-transparent border-l-[#333]" />
            </div>
          </div>
        </div>
      </div>
      <div className="flex h-[14px] items-center justify-end text-[11px] leading-none tracking-[-0.15px] text-black">
        Created with TradeStation. ©TradeStation Technologies, Inc. All rights reserved.
      </div>
    </div>
  );
}
